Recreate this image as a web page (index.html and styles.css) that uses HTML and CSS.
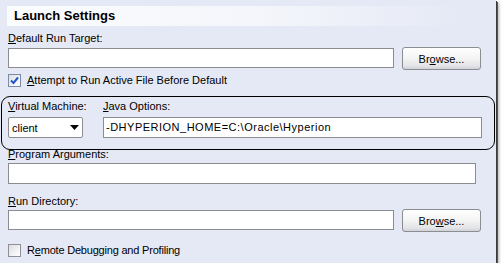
FILE: index.html
```
<!DOCTYPE html>
<html lang="en">
<head>
    <meta charset="UTF-8">
    <title>Launch Settings</title>
    <link rel="stylesheet" href="styles.css">
</head>
<body>

<div class="panel">
    <div class="title">Launch Settings</div>

    <div class="field-label label-first"><u>D</u>efault Run Target:</div>
    <div class="row">
        <div class="textbox short"></div>
        <button class="btn">Br<u>o</u>wse...</button>
    </div>

    <div class="check check-first">
        <span class="box checked">
            <svg width="9" height="9" viewBox="0 0 9 9"><path d="M1 4.5 L3.5 7 L8 1.5" fill="none" stroke="#2456c8" stroke-width="2"/></svg>
        </span>
        <span><u>A</u>ttempt to Run Active File Before Default</span>
    </div>

    <!-- highlighted row -->
    <div class="vm-row">
        <div class="vm-col">
            <div class="field-label"><u>V</u>irtual Machine:</div>
            <div class="combo">
                <span>client</span>
                <svg width="9" height="5" viewBox="0 0 9 5"><path d="M0 0 H9 L4.5 5 Z" fill="#000"/></svg>
            </div>
        </div>
        <div class="java-col">
            <div class="field-label"><u>J</u>ava Options:</div>
            <div class="textbox java">-DHYPERION_HOME=C:\Oracle\Hyperion</div>
        </div>
    </div>

    <div class="field-label label-args"><u>P</u>rogram Arguments:</div>
    <div class="textbox args"></div>

    <div class="field-label label-dir"><u>R</u>un Directory:</div>
    <div class="row row-dir">
        <div class="textbox short"></div>
        <button class="btn">Bro<u>w</u>se...</button>
    </div>

    <div class="check check-last">
        <span class="box"></span>
        <span class="tight">R<u>e</u>mote Debugging and Profiling</span>
    </div>
</div>

</body>
</html>
```

FILE: styles.css
```
body {
    margin: 0;
    padding: 0;
    background-color: #ffffff;
    font-family: "Liberation Sans", Arial, sans-serif;
    font-size: 11px;
    color: #000;
}
u {
    text-decoration: underline;
    text-underline-offset: 1px;
}
.panel {
    width: 488px;
    height: 257px;
    padding: 6px 0 0 8px;
    background-color: #e5e9f5;
    box-shadow: 1px 1px 0 #3c3c3c, 2px 2px 0 #555, 3px 3px 3px rgba(0, 0, 0, 0.3);
    display: flex;
    flex-direction: column;
}
.title {
    margin-left: -1px;
    width: 448px;
    height: 20px;
    line-height: 20px;
    padding-left: 7px;
    font-size: 13px;
    font-weight: bold;
    background: linear-gradient(to right, #fbfcfe 0%, #f4f6fb 55%, rgba(229, 233, 245, 0) 100%);
}
.field-label {
    line-height: 13px;
    height: 13px;
}
.label-first {
    margin-top: 6px;
}
.row {
    display: flex;
    align-items: flex-start;
    gap: 8px;
    margin-top: 2px;
}
.row-dir {
    margin-top: 1px;
}
.textbox {
    box-sizing: border-box;
    height: 20px;
    background: #fff;
    border: 1px solid #8a8c90;
    padding: 0 3px;
    line-height: 18px;
}
.row .textbox {
    margin-top: 1px;
}
.short {
    width: 386px;
}
.args {
    width: 468px;
    height: 21px;
    margin-top: 2px;
}
.btn {
    box-sizing: border-box;
    width: 79px;
    height: 23px;
    padding: 0;
    margin: 0;
    font-family: inherit;
    font-size: 11px;
    color: #000;
    border: 1px solid #8b8d91;
    border-radius: 3px;
    background: linear-gradient(to bottom, #ffffff 0%, #f4f4f4 50%, #e3e4e8 85%, #d2d3d8 100%);
}
.check {
    display: flex;
    align-items: center;
    gap: 6px;
    line-height: 13px;
    height: 13px;
}
.check-first {
    margin-top: 4px;
}
.check-last {
    margin-top: 12px;
}
.tight {
    letter-spacing: -0.2px;
}
.box {
    box-sizing: border-box;
    width: 13px;
    height: 13px;
    border: 1px solid #8e9095;
    background: linear-gradient(135deg, #dcdde2 0%, #f2f2f5 60%, #ffffff 100%);
    display: flex;
    align-items: center;
    justify-content: center;
}
.box.checked {
    border-color: #7b8aa6;
}
.vm-row {
    position: relative;
    display: flex;
    margin-top: 13px;
}
.vm-row::before {
    content: "";
    position: absolute;
    left: -7px;
    top: -4px;
    width: 492px;
    height: 52px;
    border: 1px solid #000;
    border-radius: 9px;
}
.vm-col {
    width: 95px;
}
.java-col {
    width: 379px;
}
.combo {
    box-sizing: border-box;
    width: 75px;
    height: 21px;
    margin-top: 4px;
    background: #fff;
    border: 1px solid #8a8c90;
    border-radius: 2px;
    display: flex;
    align-items: center;
    justify-content: space-between;
    padding: 0 3px 0 3px;
}
.java {
    height: 21px;
    margin-top: 4px;
    padding-left: 2px;
    line-height: 19px;
    letter-spacing: 0.5px;
}
.label-args {
    margin-top: 10px;
}
.label-dir {
    margin-top: 11px;
}
```
